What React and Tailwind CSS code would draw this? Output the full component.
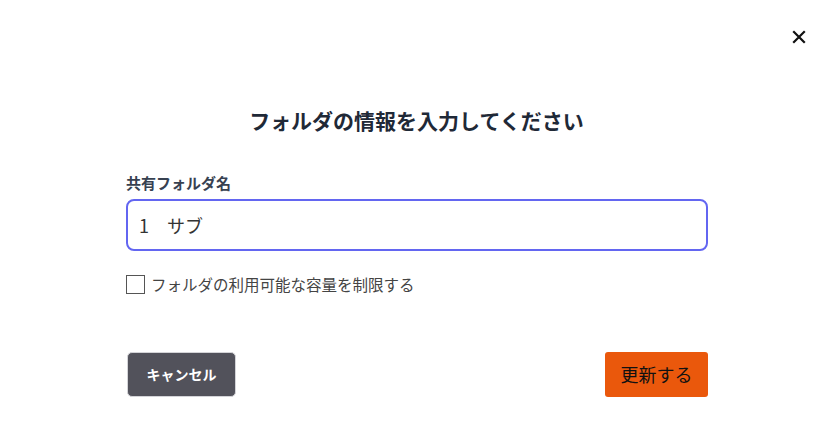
import React from "react";

export default function App() {
  return (
    <div
      className="w-[833px] h-[448px] bg-white relative"
      style={{ fontFamily: '"Noto Sans CJK JP", "Noto Sans", sans-serif' }}
    >
      <button className="absolute left-[791px] top-[29px] w-[16px] h-[16px] flex items-center justify-center">
        <svg width="14" height="14" viewBox="0 0 14 14" fill="none" stroke="#111" strokeWidth="2.2" strokeLinecap="square">
          <path d="M2 2 L12 12 M12 2 L2 12" />
        </svg>
      </button>
      <div className="pt-[102px] px-[126px]">
        <h2 className="text-center text-[21px] leading-[36px] font-bold text-[#1f2937]">
          フォルダの情報を入力してください
        </h2>
        <div className="mt-[34px] text-[15px] leading-[22px] font-bold text-[#374151]">
          共有フォルダ名
        </div>
        <div className="mt-[5px] h-[52px] w-[582px] border-2 border-[#6366f1] rounded-[8px] flex items-center px-[11px] text-[18px] text-[#333]">
          1　サブ
        </div>
        <label className="mt-[22px] flex items-center gap-[6px] text-[15.5px] text-[#444]">
          <span className="w-[19px] h-[19px] border border-[#555] bg-white inline-block" />
          <span>フォルダの利用可能な容量を制限する</span>
        </label>
        <div className="mt-[56px] flex justify-between w-[582px]">
          <button className="ml-[1px] w-[109px] h-[45px] rounded-[5px] bg-[#52525b] border border-[#d4d4d8] text-white text-[14px] font-bold">
            キャンセル
          </button>
          <button className="w-[103px] h-[45px] rounded-[3px] bg-[#ea580c] text-[#111] text-[18px]">
            更新する
          </button>
        </div>
      </div>
    </div>
  );
}
